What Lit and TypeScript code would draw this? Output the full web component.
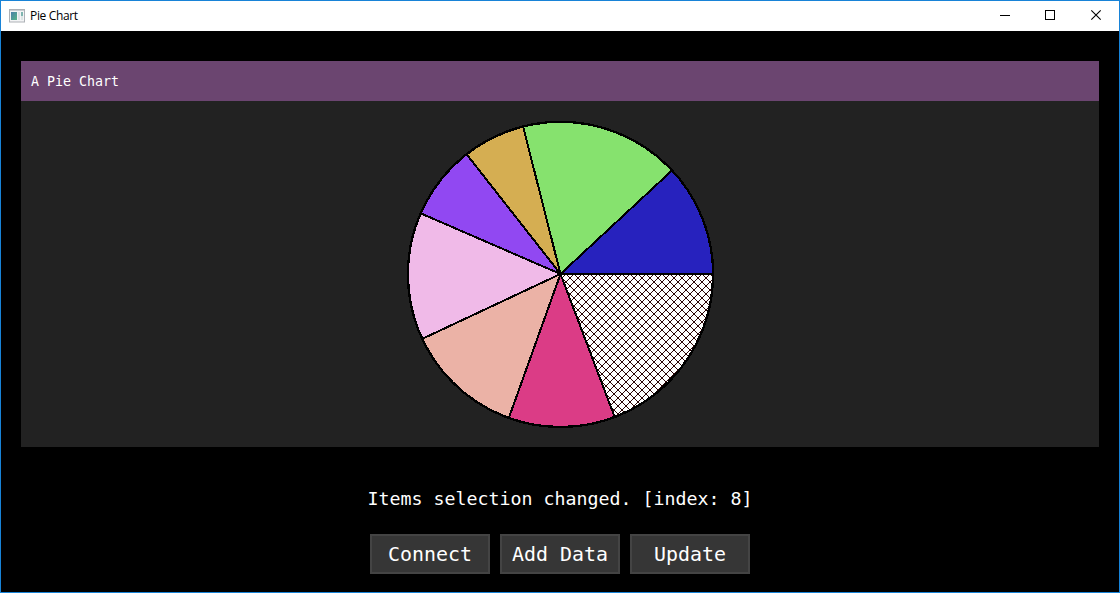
import { LitElement, html, svg, css } from "lit";
import { customElement, state } from "lit/decorators.js";

interface Slice { from: number; to: number; fill: string }

const CX = 154.5, CY = 154.4, R = 152.6;
const HUB_Y = 154;
const point = (deg: number) => {
  const a = (deg * Math.PI) / 180;
  return `${(CX + R * Math.cos(a)).toFixed(2)} ${(CY - R * Math.sin(a)).toFixed(2)}`;
};

@customElement("pie-chart")
export class PieChart extends LitElement {
  static styles = css`
    :host { display: block; }
    svg { display: block; }
    .slice { stroke: #000; stroke-width: 2; stroke-linejoin: round; shape-rendering: crispEdges; }
    .rim { fill: none; stroke: #000; stroke-width: 2.3; shape-rendering: crispEdges; }
  `;
  private slices: Slice[] = [
    { from: 0.15, to: 43, fill: "#2722be" },
    { from: 43, to: 104.2, fill: "#86e26e" },
    { from: 104.2, to: 128, fill: "#d5ae52" },
    { from: 128, to: 156.4, fill: "#9148f2" },
    { from: 156.4, to: 205, fill: "#f0bae8" },
    { from: 205, to: 250.2, fill: "#ebb2a6" },
    { from: 250.2, to: 290.8, fill: "#db3c86" },
    { from: 290.8, to: 360.15, fill: "url(#hatch)" },
  ];
  render() {
    return html`<svg width="308" height="308" viewBox="0 0 308 308">
      <defs>
        <pattern id="hatch" width="8" height="8" patternUnits="userSpaceOnUse" patternTransform="translate(0 2)">
          <rect width="8" height="8" fill="#fff" />
          ${[0, 1, 2, 3, 4, 5, 6, 7].map((i) => svg`
            <rect x=${i} y=${i} width="1" height="1" fill="#2a0404" shape-rendering="crispEdges" />
            <rect x=${7 - i} y=${i} width="1" height="1" fill="#2a0404" shape-rendering="crispEdges" />`)}
        </pattern>
      </defs>
      ${this.slices.map((s) => svg`<path class="slice" fill=${s.fill}
        d="M${CX} ${HUB_Y} L${point(s.from)} A${R} ${R} 0 0 0 ${point(s.to)} Z" />`)}
      <circle class="rim" cx=${CX} cy=${CY} r=${R} />
    </svg>`;
  }
}

@customElement("app-root")
export class AppRoot extends LitElement {
  static styles = css`
    :host { display: block; }
    .window {
      box-sizing: border-box; width: 1120px; height: 593px; border: 1px solid #1883d7;
      background: #000; color: #fff; display: flex; flex-direction: column;
      font-family: "DejaVu Sans Mono", monospace; overflow: hidden;
    }
    .titlebar { height: 30px; flex: none; background: #fff; color: #000; display: flex; align-items: center; }
    .app-icon { margin: 0 5px 1px 8px; }
    .caption { flex: 1; font: 12px/28px "Open Sans", "Noto Sans", sans-serif; letter-spacing: -0.34px; padding-bottom: 1px; }
    .controls { display: flex; }
    .controls svg { display: block; }
    .panel { margin: 30px 20px 0; flex: none; }
    .panel-head {
      height: 40px; box-sizing: border-box; padding: 0 10px; background: #6b4570;
      font-size: 13.29px; line-height: 41px;
    }
    .panel-body { height: 346px; background: #222; display: flex; align-items: center; justify-content: center; }
    .status { margin-top: 40px; height: 24px; line-height: 24px; font-size: 18.27px; text-align: center; white-space: pre; }
    .buttons { margin-top: 23px; display: flex; justify-content: center; gap: 10px; }
    .button {
      box-sizing: border-box; width: 120px; height: 40px; padding: 2px 0 0; border: 2px solid #444;
      border-radius: 0; background: #363636; color: #fff; font: 19.93px/34px "DejaVu Sans Mono", monospace;
    }
  `;
  @state() private index = 8;

  render() {
    return html`<div class="window">
      <div class="titlebar">
        <svg class="app-icon" width="16" height="14" viewBox="0 0 16 14">
          <defs><linearGradient id="g" x2="1" y2="1">
            <stop offset="0" stop-color="#4a7fa8" /><stop offset="1" stop-color="#58b488" />
          </linearGradient></defs>
          <rect x=".5" y=".5" width="15" height="12.5" fill="#f3f4f5" stroke="#adb1b6" />
          <rect x="1" y="1" width="14" height="1" fill="#c9cdd1" />
          <rect x="2" y="3" width="6" height="8" fill="url(#g)" />
          <rect x="9" y="3" width="2" height="8" fill="#dfe2e6" />
          <rect x="12" y="3" width="2" height="4" fill="#7fb5b0" />
          <rect x="12" y="7" width="2" height="4" fill="#dde5e5" />
        </svg>
        <div class="caption">Pie Chart</div>
        <div class="controls">
          <svg width="137" height="30" viewBox="0 0 137 30" fill="none" stroke="#000">
            <path d="M18 14.5h10M63.5 9.5h9v9h-9z" shape-rendering="crispEdges" />
            <path d="M109.3 9.3l9.4 9.4M118.7 9.3l-9.4 9.4" stroke-width="1.1" />
          </svg>
        </div>
      </div>
      <div class="panel">
        <div class="panel-head">A Pie Chart</div>
        <div class="panel-body"><pie-chart></pie-chart></div>
      </div>
      <div class="status">Items selection changed. [index: ${this.index}]</div>
      <div class="buttons">
        ${["Connect", "Add Data", "Update"].map((t) => html`<button class="button">${t}</button>`)}
      </div>
    </div>`;
  }
}
